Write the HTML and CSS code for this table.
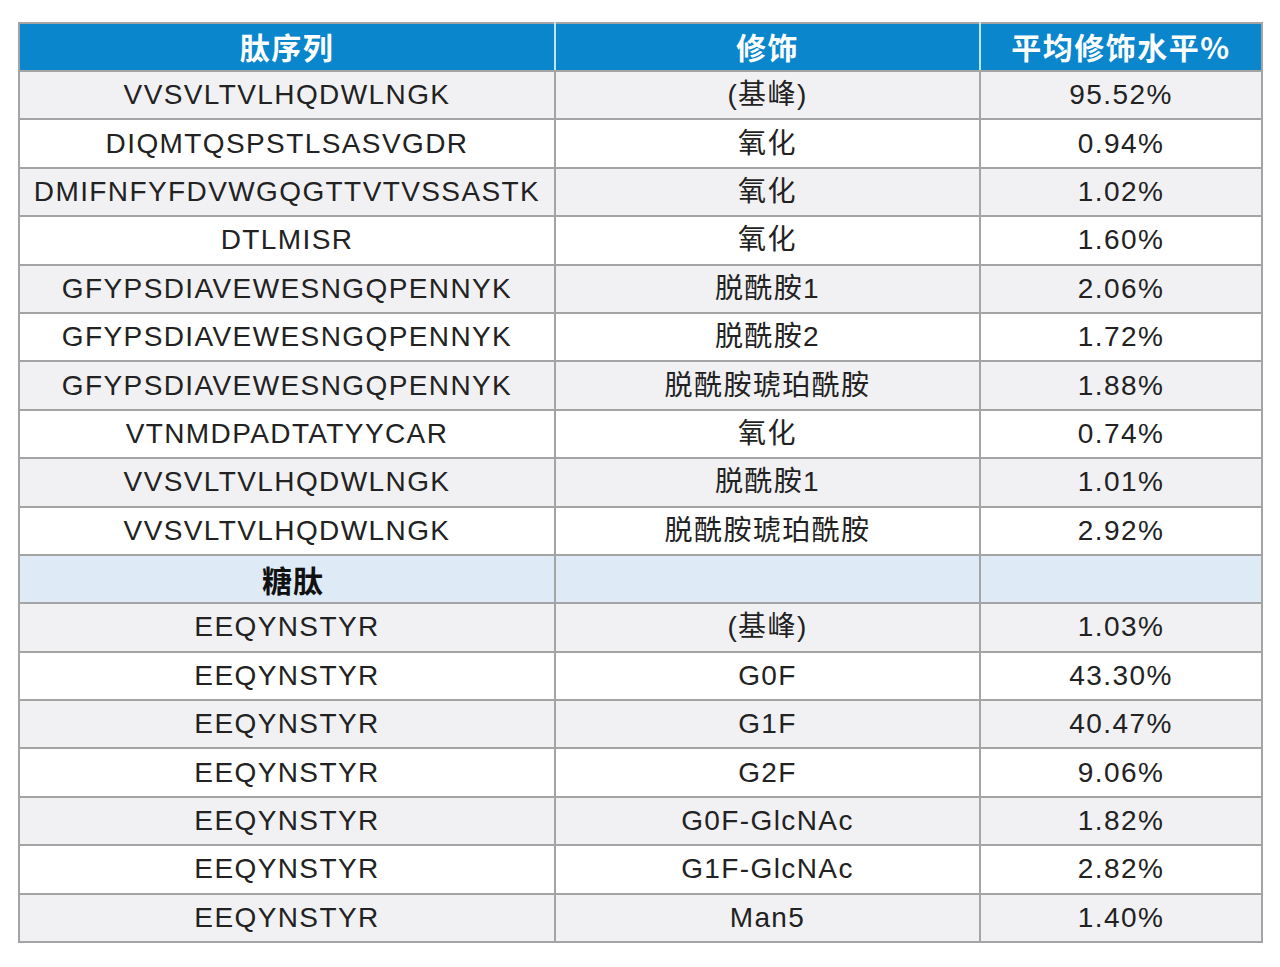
FILE: index.html
```html
<!DOCTYPE html>
<html lang="zh">
<head>
<meta charset="utf-8">
<link rel="stylesheet" href="styles.css">
</head>
<body>
<table class="tbl">
  <colgroup><col class="c1"><col class="c2"><col class="c3"></colgroup>
  <thead>
    <tr><th>肽序列</th><th>修饰</th><th>平均修饰水平%</th></tr>
  </thead>
  <tbody>
    <tr class="g"><td>VVSVLTVLHQDWLNGK</td><td>(基峰)</td><td>95.52%</td></tr>
    <tr><td>DIQMTQSPSTLSASVGDR</td><td>氧化</td><td>0.94%</td></tr>
    <tr class="g"><td>DMIFNFYFDVWGQGTTVTVSSASTK</td><td>氧化</td><td>1.02%</td></tr>
    <tr><td>DTLMISR</td><td>氧化</td><td>1.60%</td></tr>
    <tr class="g"><td>GFYPSDIAVEWESNGQPENNYK</td><td>脱酰胺1</td><td>2.06%</td></tr>
    <tr><td>GFYPSDIAVEWESNGQPENNYK</td><td>脱酰胺2</td><td>1.72%</td></tr>
    <tr class="g"><td>GFYPSDIAVEWESNGQPENNYK</td><td>脱酰胺琥珀酰胺</td><td>1.88%</td></tr>
    <tr><td>VTNMDPADTATYYCAR</td><td>氧化</td><td>0.74%</td></tr>
    <tr class="g"><td>VVSVLTVLHQDWLNGK</td><td>脱酰胺1</td><td>1.01%</td></tr>
    <tr><td>VVSVLTVLHQDWLNGK</td><td>脱酰胺琥珀酰胺</td><td>2.92%</td></tr>
    <tr class="sec"><td class="sec-title">糖肽</td><td></td><td></td></tr>
    <tr class="g"><td>EEQYNSTYR</td><td>(基峰)</td><td>1.03%</td></tr>
    <tr><td>EEQYNSTYR</td><td>G0F</td><td>43.30%</td></tr>
    <tr class="g"><td>EEQYNSTYR</td><td>G1F</td><td>40.47%</td></tr>
    <tr><td>EEQYNSTYR</td><td>G2F</td><td>9.06%</td></tr>
    <tr class="g"><td>EEQYNSTYR</td><td>G0F-GlcNAc</td><td>1.82%</td></tr>
    <tr><td>EEQYNSTYR</td><td>G1F-GlcNAc</td><td>2.82%</td></tr>
    <tr class="g"><td>EEQYNSTYR</td><td>Man5</td><td>1.40%</td></tr>
  </tbody>
</table>
</body>
</html>
```
FILE: styles.css
```css
html, body {
  margin: 0;
  padding: 0;
  background: #ffffff;
}
body {
  padding: 22px 0 0 18px;
}
.tbl {
  border-collapse: collapse;
  table-layout: fixed;
  width: 1243px;
  font-family: "Liberation Sans", "Noto Sans CJK SC", sans-serif;
  color: #222222;
}
.c1 { width: 536px; }
.c2 { width: 425px; }
.c3 { width: 282px; }
.tbl th {
  background: #0a86cc;
  color: #ffffff;
  font-family: "Noto Sans CJK SC", sans-serif;
  font-weight: 700;
  font-size: 30px;
  letter-spacing: 1.5px;
  height: 43px;
  padding: 0 0 3px 0;
  line-height: 1;
  border: 2px solid #a4a4a4;
  border-left-color: #bfe6f7;
  border-right-color: #bfe6f7;
  text-align: center;
  vertical-align: middle;
}
.tbl th:first-child { border-left-color: #a4a4a4; }
.tbl th:last-child { border-right-color: #a4a4a4; }
.tbl td {
  height: 46.4px;
  padding: 0;
  border: 2px solid #a4a4a4;
  text-align: center;
  vertical-align: middle;
  font-size: 28px;
  letter-spacing: 1.4px;
  line-height: 1;
  background: #ffffff;
}
.tbl tr.g td { background: #f1f1f4; }
.tbl tr.sec td {
  background: #dfeaf7;
}
.tbl td.sec-title {
  font-family: "Noto Sans CJK SC", sans-serif;
  font-weight: 700;
  font-size: 30px;
  letter-spacing: 1px;
  padding-left: 12px;
  color: #111111;
}
```
